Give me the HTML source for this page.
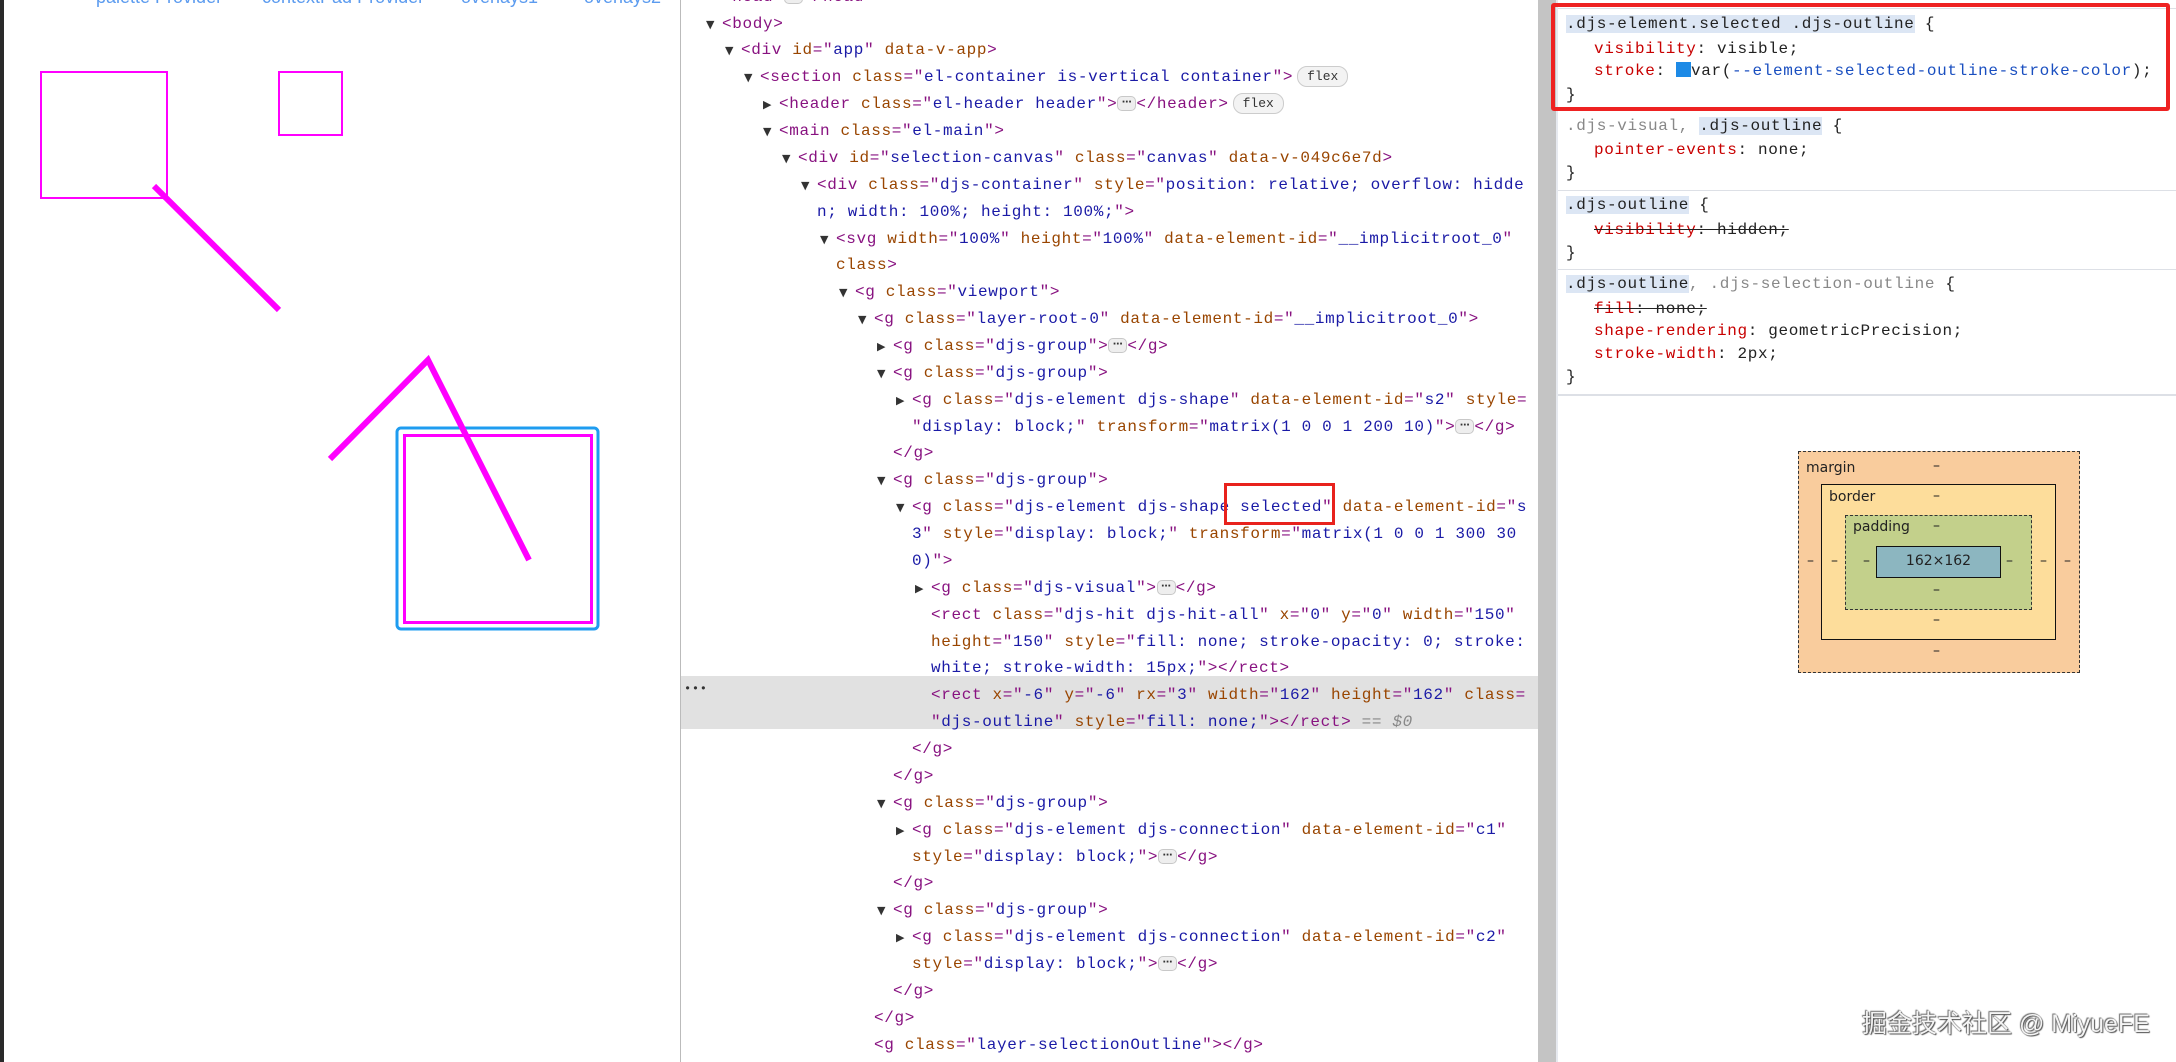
<!DOCTYPE html>
<html><head><meta charset="utf-8">
<style>
*{margin:0;padding:0;box-sizing:border-box}
html,body{width:2176px;height:1062px;overflow:hidden;background:#fff}
body{position:relative;font-family:"Liberation Mono",monospace}
.m{position:absolute;font-family:"Liberation Mono",monospace;font-size:16px;letter-spacing:0.65px;line-height:27px;white-space:pre;color:#222}
.t{color:#881280}.n{color:#994500}.v{color:#1a1aa6}
.tri{position:absolute;font-size:11px;color:#333;line-height:27px;font-family:"DejaVu Sans",sans-serif}
.e{display:inline-block;width:19px;height:15px;border:1px solid #c8c8c8;background:#eee;border-radius:5px;font-size:10px;line-height:11px;text-align:center;vertical-align:middle;letter-spacing:0;color:#333;font-family:"DejaVu Sans",sans-serif;font-weight:bold}
.f{display:inline-block;height:21px;padding:0 9px;border:1px solid #ccc;background:#f3f3f3;border-radius:10px;font-size:13px;line-height:19px;vertical-align:middle;letter-spacing:0;color:#333;margin-left:4px}
.p{color:#c80000}.g{color:#888}.hl{background:#dce6f4}
.sep{position:absolute;left:1558px;right:0;height:1px;background:#dde0e6}
.bm{position:absolute;font-family:"DejaVu Sans","Liberation Sans",sans-serif;font-size:14px;color:#222}
</style></head><body>

<div style="position:absolute;left:0;top:0;width:4px;height:1062px;background:#2a2a2a"></div>
<svg style="position:absolute;left:0;top:0" width="680" height="1062">
<g font-family="Liberation Sans,sans-serif" font-size="18" fill="#5b9bef">
<text x="96" y="3">palette Provider</text>
<text x="262" y="3">contextPad Provider</text>
<text x="461" y="3">overlays1</text>
<text x="584" y="3">overlays2</text>
</g>
<rect x="41" y="72" width="126" height="126" fill="none" stroke="#ff00ff" stroke-width="2"/>
<rect x="279" y="72" width="63" height="63" fill="none" stroke="#ff00ff" stroke-width="2"/>
<line x1="154" y1="186" x2="279" y2="310" stroke="#ff00ff" stroke-width="6"/>
<rect x="397" y="428" width="201" height="201" rx="4" fill="none" stroke="#1e9cf0" stroke-width="3"/>
<rect x="404.5" y="435.5" width="187" height="187" fill="none" stroke="#ff00ff" stroke-width="3"/>
<polyline points="330,459 428,360 529,560" fill="none" stroke="#ff00ff" stroke-width="6"/>
</svg>

<div style="position:absolute;left:680px;top:0;width:1px;height:1062px;background:#bbb"></div>
<div style="position:absolute;left:681px;top:676px;width:857px;height:53px;background:#e1e1e1"></div>
<div style="position:absolute;left:1538px;top:0;width:18px;height:1062px;background:#c4c4c4"></div>

<div class="m" style="left:722px;top:-16.4px"><span class="t">&lt;head&gt;</span><span class="e">⋯</span><span class="t">&lt;/head&gt;</span></div>

<span class="tri" style="left:706px;top:10.5px">▼</span><div class="m" style="left:722px;top:10.5px"><span class="t">&lt;body&gt;</span></div>
<span class="tri" style="left:725px;top:37.4px">▼</span><div class="m" style="left:741px;top:37.4px"><span class="t">&lt;div </span><span class="n">id</span><span class="t">="</span><span class="v">app</span><span class="t">" </span><span class="n">data-v-app</span><span class="t">&gt;</span></div>
<span class="tri" style="left:744px;top:64.2px">▼</span><div class="m" style="left:760px;top:64.2px"><span class="t">&lt;section </span><span class="n">class</span><span class="t">="</span><span class="v">el-container is-vertical container</span><span class="t">"&gt;</span><span class="f">flex</span></div>
<span class="tri" style="left:763px;top:91.1px">▶</span><div class="m" style="left:779px;top:91.1px"><span class="t">&lt;header </span><span class="n">class</span><span class="t">="</span><span class="v">el-header header</span><span class="t">"&gt;</span><span class="e">⋯</span><span class="t">&lt;/header&gt;</span><span class="f">flex</span></div>
<span class="tri" style="left:763px;top:118px">▼</span><div class="m" style="left:779px;top:118px"><span class="t">&lt;main </span><span class="n">class</span><span class="t">="</span><span class="v">el-main</span><span class="t">"&gt;</span></div>
<span class="tri" style="left:782px;top:144.9px">▼</span><div class="m" style="left:798px;top:144.9px"><span class="t">&lt;div </span><span class="n">id</span><span class="t">="</span><span class="v">selection-canvas</span><span class="t">" </span><span class="n">class</span><span class="t">="</span><span class="v">canvas</span><span class="t">" </span><span class="n">data-v-049c6e7d</span><span class="t">&gt;</span></div>
<span class="tri" style="left:801px;top:171.7px">▼</span><div class="m" style="left:817px;top:171.7px"><span class="t">&lt;div </span><span class="n">class</span><span class="t">="</span><span class="v">djs-container</span><span class="t">" </span><span class="n">style</span><span class="t">="</span><span class="v">position: relative; overflow: hidde</span></div>
<div class="m" style="left:817px;top:198.6px"><span class="v">n; width: 100%; height: 100%;</span><span class="t">"&gt;</span></div>
<span class="tri" style="left:820px;top:225.5px">▼</span><div class="m" style="left:836px;top:225.5px"><span class="t">&lt;svg </span><span class="n">width</span><span class="t">="</span><span class="v">100%</span><span class="t">" </span><span class="n">height</span><span class="t">="</span><span class="v">100%</span><span class="t">" </span><span class="n">data-element-id</span><span class="t">="</span><span class="v">__implicitroot_0</span><span class="t">"</span></div>
<div class="m" style="left:836px;top:252.3px"><span class="n">class</span><span class="t">&gt;</span></div>
<span class="tri" style="left:839px;top:279.2px">▼</span><div class="m" style="left:855px;top:279.2px"><span class="t">&lt;g </span><span class="n">class</span><span class="t">="</span><span class="v">viewport</span><span class="t">"&gt;</span></div>
<span class="tri" style="left:858px;top:306.1px">▼</span><div class="m" style="left:874px;top:306.1px"><span class="t">&lt;g </span><span class="n">class</span><span class="t">="</span><span class="v">layer-root-0</span><span class="t">" </span><span class="n">data-element-id</span><span class="t">="</span><span class="v">__implicitroot_0</span><span class="t">"&gt;</span></div>
<span class="tri" style="left:877px;top:332.9px">▶</span><div class="m" style="left:893px;top:332.9px"><span class="t">&lt;g </span><span class="n">class</span><span class="t">="</span><span class="v">djs-group</span><span class="t">"&gt;</span><span class="e">⋯</span><span class="t">&lt;/g&gt;</span></div>
<span class="tri" style="left:877px;top:359.8px">▼</span><div class="m" style="left:893px;top:359.8px"><span class="t">&lt;g </span><span class="n">class</span><span class="t">="</span><span class="v">djs-group</span><span class="t">"&gt;</span></div>
<span class="tri" style="left:896px;top:386.7px">▶</span><div class="m" style="left:912px;top:386.7px"><span class="t">&lt;g </span><span class="n">class</span><span class="t">="</span><span class="v">djs-element djs-shape</span><span class="t">" </span><span class="n">data-element-id</span><span class="t">="</span><span class="v">s2</span><span class="t">" </span><span class="n">style</span><span class="t">=</span></div>
<div class="m" style="left:912px;top:413.6px"><span class="t">"</span><span class="v">display: block;</span><span class="t">" </span><span class="n">transform</span><span class="t">="</span><span class="v">matrix(1 0 0 1 200 10)</span><span class="t">"&gt;</span><span class="e">⋯</span><span class="t">&lt;/g&gt;</span></div>
<div class="m" style="left:893px;top:440.4px"><span class="t">&lt;/g&gt;</span></div>
<span class="tri" style="left:877px;top:467.3px">▼</span><div class="m" style="left:893px;top:467.3px"><span class="t">&lt;g </span><span class="n">class</span><span class="t">="</span><span class="v">djs-group</span><span class="t">"&gt;</span></div>
<span class="tri" style="left:896px;top:494.2px">▼</span><div class="m" style="left:912px;top:494.2px"><span class="t">&lt;g </span><span class="n">class</span><span class="t">="</span><span class="v">djs-element djs-shape selected</span><span class="t">" </span><span class="n">data-element-id</span><span class="t">="</span><span class="v">s</span></div>
<div style="position:absolute;left:1224px;top:483px;width:111px;height:42px;border:3px solid #e8221d"></div>
<div class="m" style="left:912px;top:521px"><span class="v">3</span><span class="t">" </span><span class="n">style</span><span class="t">="</span><span class="v">display: block;</span><span class="t">" </span><span class="n">transform</span><span class="t">="</span><span class="v">matrix(1 0 0 1 300 30</span></div>
<div class="m" style="left:912px;top:547.9px"><span class="v">0)</span><span class="t">"&gt;</span></div>
<span class="tri" style="left:915px;top:574.8px">▶</span><div class="m" style="left:931px;top:574.8px"><span class="t">&lt;g </span><span class="n">class</span><span class="t">="</span><span class="v">djs-visual</span><span class="t">"&gt;</span><span class="e">⋯</span><span class="t">&lt;/g&gt;</span></div>
<div class="m" style="left:931px;top:601.6px"><span class="t">&lt;rect </span><span class="n">class</span><span class="t">="</span><span class="v">djs-hit djs-hit-all</span><span class="t">" </span><span class="n">x</span><span class="t">="</span><span class="v">0</span><span class="t">" </span><span class="n">y</span><span class="t">="</span><span class="v">0</span><span class="t">" </span><span class="n">width</span><span class="t">="</span><span class="v">150</span><span class="t">"</span></div>
<div class="m" style="left:931px;top:628.5px"><span class="n">height</span><span class="t">="</span><span class="v">150</span><span class="t">" </span><span class="n">style</span><span class="t">="</span><span class="v">fill: none; stroke-opacity: 0; stroke:</span></div>
<div class="m" style="left:931px;top:655.4px"><span class="v">white; stroke-width: 15px;</span><span class="t">"&gt;&lt;/rect&gt;</span></div>
<div class="m" style="left:684px;top:676px;font-size:12px;color:#333">•••</div>
<div class="m" style="left:931px;top:682.3px"><span class="t">&lt;rect </span><span class="n">x</span><span class="t">="</span><span class="v">-6</span><span class="t">" </span><span class="n">y</span><span class="t">="</span><span class="v">-6</span><span class="t">" </span><span class="n">rx</span><span class="t">="</span><span class="v">3</span><span class="t">" </span><span class="n">width</span><span class="t">="</span><span class="v">162</span><span class="t">" </span><span class="n">height</span><span class="t">="</span><span class="v">162</span><span class="t">" </span><span class="n">class</span><span class="t">=</span></div>
<div class="m" style="left:931px;top:709.1px"><span class="t">"</span><span class="v">djs-outline</span><span class="t">" </span><span class="n">style</span><span class="t">="</span><span class="v">fill: none;</span><span class="t">"&gt;&lt;/rect&gt;</span><span style="color:#888"> == <i>$0</i></span></div>
<div class="m" style="left:912px;top:736px"><span class="t">&lt;/g&gt;</span></div>
<div class="m" style="left:893px;top:762.9px"><span class="t">&lt;/g&gt;</span></div>
<span class="tri" style="left:877px;top:789.7px">▼</span><div class="m" style="left:893px;top:789.7px"><span class="t">&lt;g </span><span class="n">class</span><span class="t">="</span><span class="v">djs-group</span><span class="t">"&gt;</span></div>
<span class="tri" style="left:896px;top:816.6px">▶</span><div class="m" style="left:912px;top:816.6px"><span class="t">&lt;g </span><span class="n">class</span><span class="t">="</span><span class="v">djs-element djs-connection</span><span class="t">" </span><span class="n">data-element-id</span><span class="t">="</span><span class="v">c1</span><span class="t">"</span></div>
<div class="m" style="left:912px;top:843.5px"><span class="n">style</span><span class="t">="</span><span class="v">display: block;</span><span class="t">"&gt;</span><span class="e">⋯</span><span class="t">&lt;/g&gt;</span></div>
<div class="m" style="left:893px;top:870.3px"><span class="t">&lt;/g&gt;</span></div>
<span class="tri" style="left:877px;top:897.2px">▼</span><div class="m" style="left:893px;top:897.2px"><span class="t">&lt;g </span><span class="n">class</span><span class="t">="</span><span class="v">djs-group</span><span class="t">"&gt;</span></div>
<span class="tri" style="left:896px;top:924.1px">▶</span><div class="m" style="left:912px;top:924.1px"><span class="t">&lt;g </span><span class="n">class</span><span class="t">="</span><span class="v">djs-element djs-connection</span><span class="t">" </span><span class="n">data-element-id</span><span class="t">="</span><span class="v">c2</span><span class="t">"</span></div>
<div class="m" style="left:912px;top:951px"><span class="n">style</span><span class="t">="</span><span class="v">display: block;</span><span class="t">"&gt;</span><span class="e">⋯</span><span class="t">&lt;/g&gt;</span></div>
<div class="m" style="left:893px;top:977.8px"><span class="t">&lt;/g&gt;</span></div>
<div class="m" style="left:874px;top:1004.7px"><span class="t">&lt;/g&gt;</span></div>
<div class="m" style="left:874px;top:1031.6px"><span class="t">&lt;g </span><span class="n">class</span><span class="t">="</span><span class="v">layer-selectionOutline</span><span class="t">"&gt;&lt;/g&gt;</span></div>
<div class="m" style="left:855px;top:1058.4px"><span class="t">&lt;/g&gt;</span></div>

<div style="position:absolute;left:1556px;top:0;width:2px;height:1062px;background:#e6e9ef"></div>
<div class="sep" style="top:8px"></div>
<div class="m" style="left:1566px;top:10.5px"><span class="hl">.djs-element.selected .djs-outline</span> {</div>
<div class="m" style="left:1594px;top:35.5px"><span class="p">visibility</span>: visible;</div>
<div class="m" style="left:1594px;top:57.5px"><span class="p">stroke</span>: <span style="display:inline-block;width:15px;height:15px;background:#1d8ae6;vertical-align:-2px"></span>var(<span class="v" style="color:#1a4fc0">--element-selected-outline-stroke-color</span>);</div>
<div class="m" style="left:1566px;top:81.5px">}</div>
<div style="position:absolute;left:1551px;top:3px;width:619px;height:108px;border:4px solid #ee2222;border-radius:3px"></div>

<div class="m" style="left:1566px;top:112.5px"><span class="g">.djs-visual, </span><span class="hl">.djs-outline</span> {</div>
<div class="m" style="left:1594px;top:136.5px"><span class="p">pointer-events</span>: none;</div>
<div class="m" style="left:1566px;top:159.5px">}</div>
<div class="sep" style="top:190px"></div>
<div class="m" style="left:1566px;top:191.5px"><span class="hl">.djs-outline</span> {</div>
<div class="m" style="left:1594px;top:216.5px;text-decoration:line-through"><span class="p">visibility</span>: hidden;</div>
<div class="m" style="left:1566px;top:239.5px">}</div>
<div class="sep" style="top:269px"></div>
<div class="m" style="left:1566px;top:270.5px"><span class="hl">.djs-outline</span><span class="g">, .djs-selection-outline</span> {</div>
<div class="m" style="left:1594px;top:295.5px;text-decoration:line-through"><span class="p">fill</span>: none;</div>
<div class="m" style="left:1594px;top:317.5px"><span class="p">shape-rendering</span>: geometricPrecision;</div>
<div class="m" style="left:1594px;top:340.5px"><span class="p">stroke-width</span>: 2px;</div>
<div class="m" style="left:1566px;top:363.5px">}</div>
<div class="sep" style="top:394px;height:2px"></div>

<div style="position:absolute;left:1798px;top:451px;width:282px;height:222px;background:#f9cc9d;border:1px dashed #333"></div>
<div style="position:absolute;left:1821px;top:484px;width:235px;height:156px;background:#fddd9b;border:1px solid #111"></div>
<div style="position:absolute;left:1845px;top:515px;width:187px;height:95px;background:#c3d08b;border:1px dashed #333"></div>
<div style="position:absolute;left:1876px;top:546px;width:125px;height:32px;background:#8cb6c0;border:1px solid #111"></div>
<div class="bm" style="left:1806px;top:460px">margin</div>
<div class="bm" style="left:1829px;top:489px">border</div>
<div class="bm" style="left:1853px;top:519px">padding</div>
<div class="bm" style="left:1878px;top:553px;width:121px;text-align:center">162×162</div>
<div class="bm" style="left:1933px;top:458px;width:12px">–</div>
<div class="bm" style="left:1933px;top:488px">–</div>
<div class="bm" style="left:1933px;top:518px">–</div>
<div class="bm" style="left:1933px;top:582px">–</div>
<div class="bm" style="left:1933px;top:612px">–</div>
<div class="bm" style="left:1933px;top:643px">–</div>
<div class="bm" style="left:1807px;top:553px">–</div>
<div class="bm" style="left:1831px;top:553px">–</div>
<div class="bm" style="left:1863px;top:553px">–</div>
<div class="bm" style="left:2006px;top:553px">–</div>
<div class="bm" style="left:2040px;top:553px">–</div>
<div class="bm" style="left:2064px;top:553px">–</div>

<div style="position:absolute;left:1862px;top:1004px;font-family:'Liberation Sans','Noto Sans CJK SC',sans-serif;font-size:25px;color:#f4f4f4;text-shadow:0 0 1px #444,1px 1px 1px #555,-1px -1px 1px #777;white-space:nowrap">掘金技术社区 @ MiyueFE</div>
</body></html>
